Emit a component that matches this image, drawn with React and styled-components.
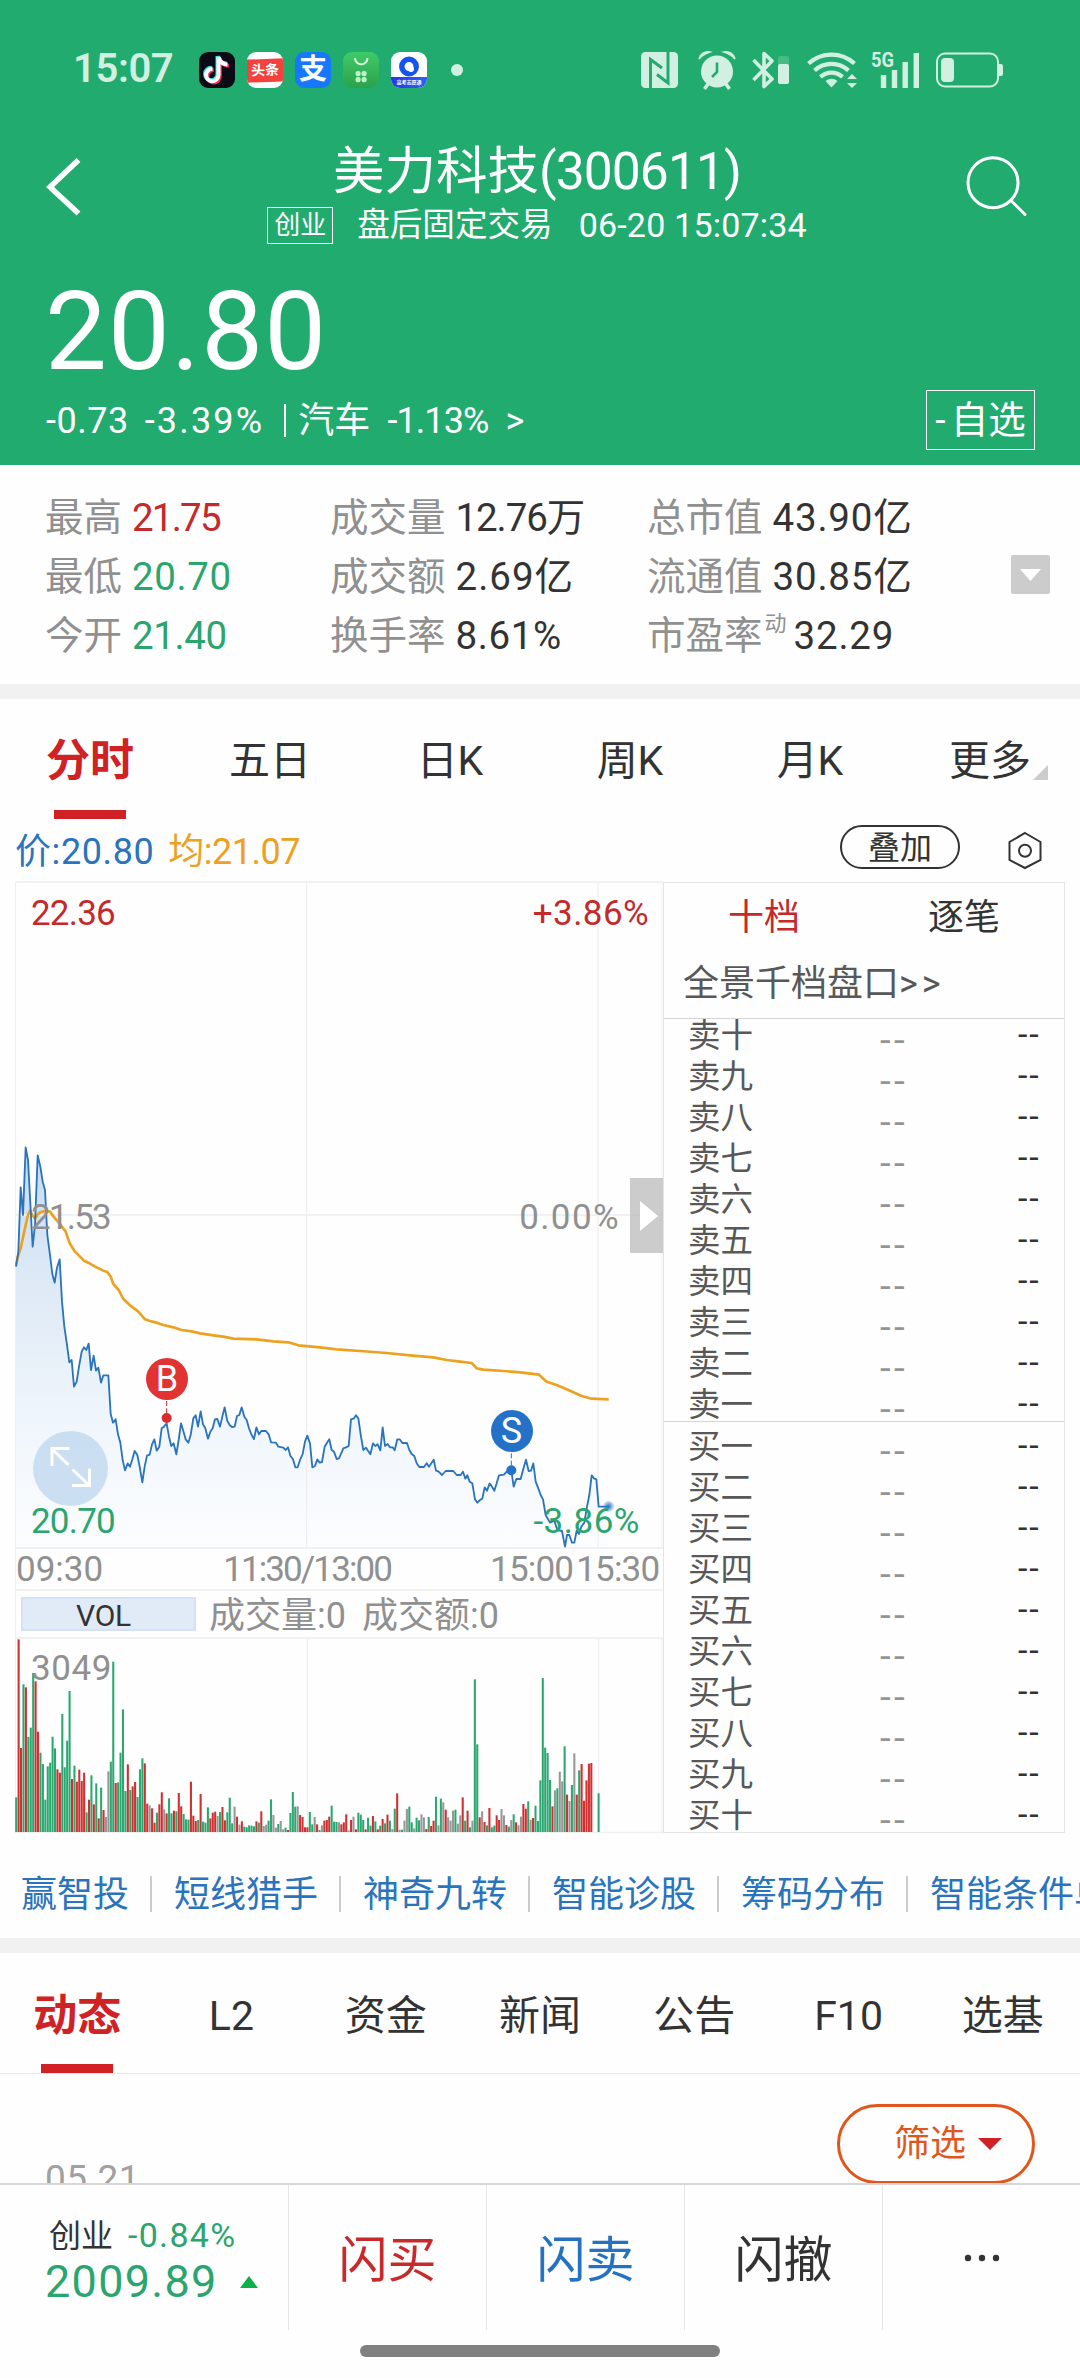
import React from "react";
import styled, { createGlobalStyle } from "styled-components";

const C = {
  up: "#c4292b",
  tab: "#d02225",
  down: "#2ba56e",
  header: "#22ab6e",
  blue: "#2a74bd",
  orange: "#eda11f",
  ink: "#333333",
  mid: "#585858",
  mute: "#909090",
  line: "#e4e4e4",
  soft: "#f1f1f1",
  mint: "#d2f0e2",
};

const Global = createGlobalStyle`
  * { box-sizing: border-box; }
  html, body { margin: 0; padding: 0; background: #fff; }
  body {
    width: 1080px;
    font-family: Roboto, "Noto Sans CJK SC", sans-serif;
    font-weight: 400;
    line-height: 1.15;
    color: ${C.ink};
  }
`;

const Page = styled.div`
  width: 1080px;
  height: 2378px;
  overflow: hidden;
  display: flex;
  flex-direction: column;
  background: #fefefe;
`;

const Text = styled.span`
  white-space: nowrap;
  font-size: ${(p) => p.$size || 36}px;
  color: ${(p) => p.$color || "inherit"};
  letter-spacing: ${(p) => p.$ls || 0}px;
  margin-left: ${(p) => p.$ml || 0}px;
`;

/* ---------- header ---------- */

const Header = styled.header`
  height: 465px;
  flex: none;
  background: ${C.header};
  color: #fff;
`;

const StatusBar = styled.div`
  height: 140px;
  display: flex;
  align-items: center;
  justify-content: space-between;
  padding: 0 76px 0 73px;
  color: ${C.mint};
`;

const StatusGroup = styled.div`
  display: flex;
  align-items: center;
`;

const Clock = styled.span`
  width: 126px;
  margin-top: -3px;
  font-size: 40px;
  font-weight: 600;
  letter-spacing: -0.4px;
`;

const AppIcon = styled.span`
  width: 36px;
  height: 36px;
  margin-right: 12px;
  border-radius: 9px;
  overflow: hidden;
  display: flex;
  flex-direction: column;
  align-items: center;
  justify-content: center;
  background: ${(p) => p.$bg};
`;

const ToutiaoBand = styled.span`
  width: 38px;
  height: 23px;
  background: #f5413d;
  color: #fff;
  font-size: 14px;
  font-weight: 700;
  line-height: 22px;
  text-align: center;
  transform: rotate(-2deg);
`;

const Zhi = styled.span`
  color: #fff;
  font-size: 28px;
  font-weight: 700;
  line-height: 36px;
`;

const TinyCaption = styled.span`
  width: 36px;
  height: 11px;
  background: linear-gradient(90deg, #2b35ea, #2b64f0);
  color: #fff;
  font-size: 5px;
  font-weight: 700;
  line-height: 11px;
  text-align: center;
`;

const Dot = styled.span`
  width: 12px;
  height: 12px;
  margin-left: 12px;
  border-radius: 50%;
  background: ${C.mint};
`;

const Glyph = styled.svg`
  display: block;
  flex: none;
  margin-left: ${(p) => p.$ml || 0}px;
`;

const NavBar = styled.div`
  height: 110px;
  display: flex;
  justify-content: space-between;
  padding: 0 50px 0 44px;
`;

const NavIcon = styled.svg`
  width: 66px;
  height: 66px;
  margin-top: 14px;
  flex: none;
`;

const TitleColumn = styled.div`
  display: flex;
  flex-direction: column;
  align-items: center;
  padding-top: 1px;
  gap: 6px;
`;

const Title = styled.div`
  height: 60px;
  line-height: 62px;
  font-size: 51.5px;
  white-space: nowrap;
`;

const SubTitle = styled.div`
  height: 37px;
  display: flex;
  align-items: center;
`;

const Board = styled.span`
  width: 66px;
  height: 37px;
  border: 1px solid #fff;
  font-size: 26px;
  line-height: 35px;
  text-align: center;
`;

const BigPrice = styled.div`
  margin: 31px 0 9px 45px;
  height: 100px;
  line-height: 102px;
  font-size: 110px;
  letter-spacing: 1.2px;
`;

const ChangeRow = styled.div`
  height: 60px;
  display: flex;
  align-items: center;
  justify-content: space-between;
  padding: 0 45px 0 46px;
`;

const Change = styled.div`
  padding-top: 3px;
  white-space: nowrap;
`;

const WatchButton = styled.button`
  width: 109px;
  height: 60px;
  padding: 0;
  border: 1px solid #fff;
  background: none;
  color: #fff;
  font: 400 37.5px/42px Roboto, "Noto Sans CJK SC", sans-serif;
  display: flex;
  align-items: center;
  justify-content: center;
  gap: 5px;
`;

const Pipe = styled.span`
  display: inline-block;
  width: 2px;
  height: 33px;
  margin: 0 12px 0 20px;
  background: #fff;
  vertical-align: -4px;
`;

/* ---------- stats ---------- */

const Stats = styled.section`
  height: 219px;
  flex: none;
  display: flex;
  align-items: center;
  justify-content: space-between;
  padding: 0 30px 0 45px;
`;

const StatGrid = styled.div`
  display: grid;
  grid-template-columns: 285px 317px 280px;
  grid-auto-rows: 59px;
  margin-top: 5px;
`;

const Stat = styled.div`
  display: flex;
  align-items: center;
  font-size: 38.5px;
  line-height: 44px;
  white-space: nowrap;
`;

const StatLabel = styled.span`
  color: ${C.mute};
`;

const Sup = styled.span`
  font-size: 22px;
  line-height: 26px;
  color: ${C.mute};
  align-self: flex-start;
  margin-top: 4px;
  margin-left: 2px;
  margin-right: -3px;
`;

const StatValue = styled.span`
  margin-left: 10px;
  color: ${(p) => p.$color || C.ink};
  letter-spacing: ${(p) => p.$ls || 0}px;
`;

const Expand = styled.button`
  width: 39px;
  height: 39px;
  border: 0;
  padding: 0;
  border-radius: 2px;
  background: #cccccc;
  display: flex;
  align-items: center;
  justify-content: center;
`;

const Band = styled.div`
  height: 15px;
  flex: none;
  background: ${C.soft};
`;

/* ---------- tabs ---------- */

const Tabs = styled.nav`
  flex: none;
  height: ${(p) => p.$h}px;
  display: grid;
  grid-template-columns: repeat(${(p) => p.$n}, 1fr);
  border-bottom: ${(p) => (p.$border ? "1px solid #e8e8e8" : "0")};
`;

const Tab = styled.div`
  display: flex;
  flex-direction: column;
  align-items: center;
  justify-content: space-between;
  padding-top: ${(p) => p.$pt}px;
  font-size: ${(p) => (p.$active ? 44 : 41)}px;
  line-height: 60px;
  font-weight: ${(p) => (p.$active ? 700 : 400)};
  color: ${(p) => (p.$active ? C.tab : C.ink)};
  white-space: nowrap;
  &::after {
    content: "";
    width: 72px;
    height: 9px;
    background: ${(p) => (p.$active ? C.tab : "transparent")};
  }
`;

const TabLabel = styled.span`
  position: relative;
`;

const Corner = styled.i`
  position: absolute;
  left: 100%;
  bottom: 11px;
  margin-left: 2px;
  border-left: 15px solid transparent;
  border-bottom: 15px solid #cccccc;
`;

/* ---------- chart ---------- */

const Legend = styled.div`
  height: 62px;
  flex: none;
  display: flex;
  align-items: center;
  padding: 0 37px 0 15px;
`;

const LegendValues = styled.div`
  padding-top: 5px;
  white-space: nowrap;
`;

const Overlay = styled.button`
  width: 120px;
  height: 44px;
  margin: -6px 47px 0 auto;
  border: 2px solid ${C.ink};
  border-radius: 22px;
  background: none;
  padding: 0;
  color: ${C.ink};
  font: 400 32px/42px Roboto, "Noto Sans CJK SC", sans-serif;
`;

const Trading = styled.section`
  height: 952px;
  flex: none;
  display: flex;
  padding: 0 15px;
`;

const ChartColumn = styled.div`
  width: 648px;
  flex: none;
  display: flex;
  flex-direction: column;
  border-left: 1px solid #efefef;
`;

const Plot = styled.div`
  position: relative;
  height: ${(p) => p.$h}px;
  margin-left: -1px;
`;

const Canvas = styled.svg`
  display: block;
  width: 648px;
  height: 100%;
`;

const PlotLabel = styled.span`
  position: absolute;
  top: ${(p) => p.$y - 19}px;
  ${(p) => (p.$right ? `right: ${p.$right}px;` : `left: ${p.$left}px;`)}
  height: 40px;
  line-height: 40px;
  font-size: 35px;
  letter-spacing: ${(p) => p.$ls || 0}px;
  color: ${(p) => p.$color};
`;

const Marker = styled.span`
  position: absolute;
  left: ${(p) => p.$x - 21}px;
  top: ${(p) => p.$y - 21}px;
  width: 42px;
  height: 42px;
  border-radius: 50%;
  background: ${(p) => p.$color};
  color: #fff;
  font-size: 36px;
  line-height: 43px;
  text-align: center;
`;

const Fullscreen = styled.svg`
  position: absolute;
  left: 18px;
  top: 550px;
  width: 75px;
  height: 75px;
`;

const PanelHandle = styled.div`
  position: absolute;
  right: 0;
  top: 297px;
  width: 33px;
  height: 75px;
  background: rgba(190, 190, 190, 0.78);
  display: flex;
  align-items: center;
  padding-left: 10px;
`;

const TimeAxis = styled.div`
  height: 42px;
  padding-top: 3px;
  display: flex;
  align-items: center;
  border-bottom: 2px solid ${C.soft};
  color: ${C.mute};
`;

const VolBar = styled.div`
  height: 48px;
  display: flex;
  align-items: center;
  border-bottom: 2px solid ${C.soft};
  color: ${C.mute};
  white-space: nowrap;
`;

const VolTag = styled.span`
  width: 175px;
  height: 34px;
  margin: 0 13px 0 5px;
  border: 2px solid #d5e2f5;
  background: #e1ebf8;
  color: ${C.ink};
  font-size: 30px;
  line-height: 33px;
  text-align: center;
  letter-spacing: -0.3px;
  padding-right: 10px;
`;

const VolFigures = styled.div`
  padding-top: 5px;
`;

/* ---------- order book ---------- */

const Book = styled.div`
  width: 402px;
  border: 1px solid ${C.line};
  margin-top: 1px;
  height: 951px;
  display: flex;
  flex-direction: column;
`;

const BookTabs = styled.div`
  height: 70px;
  display: grid;
  grid-template-columns: 1fr 1fr;
  text-align: center;
  font-size: 36px;
  line-height: 70px;
`;

const BookTab = styled.span`
  color: ${(p) => (p.$active ? C.up : C.ink)};
`;

const DepthLink = styled.div`
  height: 66px;
  padding-left: 19px;
  font-size: 36px;
  line-height: 63px;
  color: ${C.mid};
  border-bottom: 1px solid #d6d6d6;
`;

const Levels = styled.div`
  height: ${(p) => p.$h}px;
  border-bottom: ${(p) => (p.$line ? "1px solid #d6d6d6" : "0")};
`;

const LevelList = styled.div`
  margin-top: ${(p) => p.$shift}px;
`;

const Level = styled.div`
  height: 41px;
  display: grid;
  grid-template-columns: 191px 139px 60px;
  line-height: 41px;
  padding-left: 24px;
`;

const LevelName = styled.span`
  font-size: 32.5px;
  color: ${C.mid};
`;

const LevelPrice = styled.span`
  font-family: "DejaVu Sans", sans-serif;
  font-size: 35px;
  letter-spacing: 1.4px;
  color: #949494;
  line-height: 46px;
`;

const LevelSize = styled.span`
  font-size: 34px;
  letter-spacing: 1.9px;
  color: ${C.ink};
  line-height: 37px;
`;

/* ---------- lower part ---------- */

const Links = styled.nav`
  height: 105px;
  flex: none;
  display: flex;
  align-items: center;
  padding: 19px 0 0 21px;
  overflow: hidden;
`;

const LinkItem = styled.a`
  flex: none;
  display: flex;
  align-items: center;
  font-size: 36px;
  line-height: 42px;
  color: ${C.blue};
  white-space: nowrap;
  &:not(:last-child)::after {
    content: "";
    width: 2px;
    height: 36px;
    margin: -3px 22px 0 21px;
    background: #cccccc;
  }
`;

const Feed = styled.section`
  height: 109px;
  flex: none;
  overflow: hidden;
  display: flex;
  justify-content: space-between;
  align-items: flex-start;
  padding: 30px 45px 0 45px;
`;

const FeedDate = styled.span`
  margin-top: 49px;
  font-size: 37px;
  line-height: 52px;
  letter-spacing: 0.4px;
  color: #a0a0a0;
`;

const Filter = styled.button`
  width: 198px;
  height: 80px;
  padding: 0 0 0 24px;
  border: 3px solid #e0561c;
  border-radius: 40px;
  background: none;
  display: flex;
  align-items: center;
  justify-content: center;
  gap: 12px;
  color: #e0561c;
  font: 400 36px/42px Roboto, "Noto Sans CJK SC", sans-serif;
`;

const BottomBar = styled.footer`
  height: 147px;
  flex: none;
  display: grid;
  grid-template-columns: 288px repeat(4, 198px);
  border-top: 2px solid #d6d6d6;
`;

const IndexCell = styled.div`
  padding: 30px 0 0 45px;
`;

const IndexLine = styled.div`
  display: flex;
  align-items: center;
  height: ${(p) => p.$h}px;
`;

const Action = styled.div`
  display: flex;
  align-items: center;
  justify-content: center;
  border-left: 1px solid #e6e6e6;
  font-size: 49px;
  padding-top: ${(p) => p.$pt || 0}px;
  color: ${(p) => p.$color};
`;

const Home = styled.div`
  width: 360px;
  height: 12px;
  margin: 15px auto 0;
  border-radius: 6px;
  background: #808080;
  flex: none;
`;

/* ---------- data ---------- */

const PRICE =
  "48,500 55,455 62,262 69,345 77,142 84,180 91,310 98,440 105,375 113,166 121,200 128,245 135,270 142,405 150,465 157,522 164,548 171,503 179,478 186,605 193,680 201,735 208,787 215,780 222,860 230,845 237,800 245,755 252,742 259,750 266,731 273,810 281,767 288,812 295,803 303,848 310,826 325,826 332,942 339,968 347,958 354,1003 361,1028 368,1080 375,1111 383,1090 390,1100 397,1078 404,1053 412,1065 419,1100 427,1147 434,1100 441,1067 449,1064 456,1033 463,1018 470,1052 478,1040 485,985 492,980 500,970 507,1010 514,1038 521,1030 529,1063 536,1020 543,970 550,993 557,1018 565,1028 572,1005 580,955 587,946 594,980 602,934 609,973 616,985 624,1016 631,995 638,985 645,958 652,957 660,980 667,950 674,922 682,963 689,975 696,981 704,980 711,948 718,945 725,922 733,950 740,960 747,985 755,1005 762,1017 769,982 777,1003 784,993 798,993 806,1003 813,1027 828,1028 835,1040 850,1043 857,1050 864,1042 871,1067 879,1078 886,1102 893,1102 900,1080 908,1062 915,1025 922,1007 930,1030 937,1102 945,1098 952,1078 959,1088 966,1086 974,1040 981,1028 988,1018 995,1050 1002,1055 1010,1077 1017,1075 1030,1045 1038,1042 1046,1038 1053,958 1062,955 1068,946 1075,955 1083,1010 1090,1050 1098,1043 1111,1063 1119,1030 1126,1038 1133,1033 1141,1051 1148,982 1155,1038 1163,1032 1170,1042 1178,1042 1184,1051 1192,1018 1199,1018 1207,1029 1221,1029 1228,1050 1235,1062 1243,1068 1250,1090 1258,1101 1272,1101 1280,1090 1287,1100 1294,1090 1301,1079 1308,1112 1316,1115 1326,1125 1337,1113 1360,1113 1370,1125 1382,1125 1389,1115 1396,1136 1402,1126 1409,1145 1417,1150 1425,1198 1432,1208 1440,1200 1447,1196 1454,1162 1461,1172 1469,1150 1476,1160 1483,1172 1490,1150 1497,1126 1512,1124 1520,1115 1534,1112 1541,1160 1549,1137 1562,1137 1569,1110 1578,1079 1586,1113 1593,1112 1600,1090 1607,1145 1615,1165 1622,1185 1629,1198 1637,1245 1650,1268 1663,1262 1672,1290 1686,1293 1695,1340 1701,1305 1708,1305 1716,1328 1723,1328 1730,1292 1737,1302 1744,1280 1753,1268 1760,1225 1768,1185 1775,1126 1782,1135 1789,1138 1796,1220 1826,1220";

const AVERAGE =
  "48,495 55,465 62,445 77,375 84,345 90,332 97,345 105,356 112,345 120,337 135,333 150,335 165,355 180,372 197,395 209,430 225,455 240,470 252,482 265,488 285,500 310,512 322,516 332,530 340,552 356,570 370,597 390,616 415,635 435,658 450,663 470,668 490,675 520,682 545,690 575,694 600,700 640,706 670,710 700,716 770,718 820,724 865,727 895,736 960,742 1010,748 1080,753 1160,759 1230,766 1300,772 1340,780 1380,785 1415,789 1430,805 1450,809 1510,813 1560,817 1617,824 1640,845 1670,855 1710,872 1745,888 1775,896 1826,898";

// One entry per minute: direction (r up, g down, x flat) and bar height.
const VOLUME = `g104 r578 r252 g443 r434 g285 g313 g477 r452 r301 g238 g204 g97 g197 g208 g286 g251 r188 r178 g354 g194 g274 g423 r159 g199 r151 r187 r153 r178 g59 r97 g170 r83 g146 r41 g133 r66 x45 x182 g211 g511 r147 g149 g238 g368 g123 r203 g126 r137 r150 g105 g188 g221 r206 r85 x80 r71 r28 g58 r83 r119 x68 r56 g101 g56 r64 g62 r117 r77 g54 g38 g37 r151 r49 r33 g36 r114 g31 g28 g74 r41 r58 r61 x48 g60 r75 r35 g59 g103 g26 x76 r46 x22 r32 g16 g14 g20 g19 g17 r32 g28 r62 x18 x22 g34 g98 x51 x13 g24 x33 x8 g13 r6 g57 g120 g76 x77 r51 r45 r14 r14 g60 g23 x45 r23 g6 x20 r34 r36 r46 g79 g31 g30 x29 r23 r29 r53 x5 r36 x46 r8 g58 g52 g36 r8 g43 g19 r48 g32 r8 g19 r39 g26 r52 g34 x9 g70 r116 x7 g7 x34 x69 g76 g29 x11 g43 g35 x53 x44 r9 g45 r18 r34 g106 x20 g100 x89 r67 x44 x34 x64 g67 x25 x50 r104 g34 r64 g14 x34 g458 g263 r44 x62 r30 g20 r72 g14 g19 r50 r36 x69 x50 r21 g16 x36 g53 r29 x20 x46 r84 r70 g92 x37 r42 g79 g33 g155 g462 g253 g237 g156 r77 x125 g131 x181 x152 g257 r112 x93 g141 x236 r112 g185 r204 r94 r155 r205 r207 x0 x0 g116`
  .split(" ")
  .map((s) => ({ dir: s[0], h: Number(s.slice(1)) }));

const VOL_COLOR = { r: "#cf3030", g: "#2ba870", x: "#979797" };

const NUMERALS = ["一", "二", "三", "四", "五", "六", "七", "八", "九", "十"];

/* ---------- drawings ---------- */

const Triangle = ({ w, h, d, fill, ml }) => (
  <Glyph width={w} height={h} viewBox={`0 0 ${w} ${h}`} $ml={ml}>
    <path d={d} fill={fill} />
  </Glyph>
);

function StatusIcons() {
  const m = C.mint;
  return (
    <StatusGroup>
      <Glyph width="37" height="38" viewBox="0 0 37 38">
        <rect x="0" y="1" width="37" height="36" rx="4.5" fill={m} />
        <path d="M9.5 38V8.5L21 17M27 0V32L16 23.5" fill="none" stroke={C.header} strokeWidth="3" />
      </Glyph>
      <Glyph width="38" height="40" viewBox="0 0 38 40" $ml={20}>
        <circle cx="19" cy="21.5" r="16" fill={m} />
        <path d="M1 9A9 9 0 0 1 12 2Q5 4 1 9ZM37 9A9 9 0 0 0 26 2Q33 4 37 9Z" fill={m} stroke={m} strokeWidth="1.5" />
        <path d="M10 34L6.5 39M28 34L31.5 39" stroke={m} strokeWidth="3.5" />
        <path d="M19 12.5V22L14 27" fill="none" stroke={C.header} strokeWidth="2.6" />
      </Glyph>
      <Glyph width="38" height="40" viewBox="0 0 38 40" $ml={16}>
        <path d="M1.5 10L20 29L12 36.5V3.5L20 11L1.5 30" fill="none" stroke={m} strokeWidth="3.6" strokeLinejoin="round" />
        <rect x="26" y="6" width="11" height="28" rx="2" fill="#46bb85" />
        <rect x="26" y="14" width="11" height="20" rx="2" fill={m} />
      </Glyph>
      <Glyph width="51" height="40" viewBox="0 0 51 40" $ml={17}>
        <g fill="none" stroke={m} strokeWidth="4.2">
          <path d="M1.5 13.5A34 34 0 0 1 47.5 13.5" />
          <path d="M7.5 20.5A25 25 0 0 1 41.5 20.5" />
          <path d="M13.5 27A16 16 0 0 1 35.5 27" />
        </g>
        <path d="M18.5 31Q24.5 26.5 30.5 31L24.5 37.5Z" fill={m} />
        <path d="M40 29L45 24L50 29ZM40 33L45 38L50 33Z" fill={m} />
      </Glyph>
      <Glyph width="49" height="40" viewBox="0 0 49 40" overflow="visible" $ml={13}>
        <text x="0" y="17" fontFamily="Roboto, sans-serif" fontWeight="700" fontSize="21" textLength="23" lengthAdjust="spacingAndGlyphs" fill={m}>
          5G
        </text>
        <path d="M12.5 38V25M23.5 38V20M34.2 38V12M45.3 38V3" stroke={m} strokeWidth="5.4" />
      </Glyph>
      <Glyph width="68" height="36" viewBox="0 0 68 36" $ml={16}>
        <rect x="1" y="1.5" width="61" height="33" rx="8" fill="none" stroke={m} strokeWidth="2" />
        <rect x="5" y="6" width="13" height="24" rx="4" fill={m} />
        <path d="M63 12H65Q67 12 67 14V22Q67 24 65 24H63Z" fill={m} />
      </Glyph>
    </StatusGroup>
  );
}

function AppIcons() {
  const note = "M19.5 5V23A6.2 6.2 0 1 1 13.5 16.8M19.5 5Q21 12 28.5 12.5";
  return (
    <>
      <AppIcon $bg="#0b0b16">
        <Glyph width="36" height="36" viewBox="0 0 36 36" fill="none" strokeWidth="4">
          <path d={note} stroke="#2ee6e2" transform="translate(-1 -1)" />
          <path d={note} stroke="#f5305a" transform="translate(1.3 1.3)" />
          <path d={note} stroke="#fff" />
        </Glyph>
      </AppIcon>
      <AppIcon $bg="#fff">
        <ToutiaoBand>头条</ToutiaoBand>
      </AppIcon>
      <AppIcon $bg="#1677ff">
        <Zhi>支</Zhi>
      </AppIcon>
      <AppIcon $bg="linear-gradient(#3fca68, #2ba24c)">
        <Glyph width="36" height="36" viewBox="0 0 36 36">
          <path d="M12 6A6.2 6.2 0 0 0 24.5 6" fill="none" stroke="#d5f6dc" strokeWidth="2" />
          <g fill="#bdf0c8">
            <rect x="12.5" y="19" width="5.2" height="5.2" rx="2.2" />
            <rect x="18.5" y="19" width="5.2" height="5.2" rx="2.2" />
            <rect x="12.5" y="25" width="5.2" height="5.2" rx="2.2" />
            <rect x="18.5" y="25" width="5.2" height="5.2" rx="2.2" />
          </g>
        </Glyph>
      </AppIcon>
      <AppIcon $bg="#fff">
        <Glyph width="36" height="25" viewBox="0 0 36 25">
          <circle cx="18" cy="14.5" r="7.2" fill="none" stroke="#1554f0" strokeWidth="5.5" />
          <circle cx="20" cy="17" r="3" fill="#fff" />
        </Glyph>
        <TinyCaption>高考志愿通</TinyCaption>
      </AppIcon>
      <Dot />
    </>
  );
}

function PriceChart() {
  return (
    <Plot $h={668}>
      <Canvas viewBox="45 -657 1944 2004" preserveAspectRatio="none">
        <defs>
          <linearGradient id="fade" x1="0" y1="142" x2="0" y2="1342" gradientUnits="userSpaceOnUse">
            <stop offset="0" stopColor="#c6dbf2" />
            <stop offset="0.35" stopColor="#dfeaf6" />
            <stop offset="0.7" stopColor="#f0f6fc" />
            <stop offset="1" stopColor="#fcfdff" />
          </linearGradient>
          <radialGradient id="glow">
            <stop offset="0" stopColor="#2472c8" />
            <stop offset="1" stopColor="#2472c8" stopOpacity="0.12" />
          </radialGradient>
        </defs>
        <polygon points={`48,1342 ${PRICE} 1826,1342`} fill="url(#fade)" />
        <g stroke="#ececec">
          <path d="M45 -654H1989M45 345H1989M45 1344H1989" strokeWidth="6" stroke="#f1f1f1" />
          <path d="M920 -657V1344" strokeWidth="3" />
          <path d="M1794 -657V1344" strokeWidth="5" stroke="#f2f2f2" />
          <path d="M1986 -657V1344" strokeWidth="3" stroke="#f2f2f2" />
        </g>
        <polyline points={AVERAGE} fill="none" stroke={C.orange} strokeWidth="8" strokeLinejoin="round" />
        <polyline points={PRICE} fill="none" stroke={C.blue} strokeWidth="5.5" strokeLinejoin="round" />
        <path d="M500 903V942" stroke={C.up} strokeWidth="3" strokeDasharray="15 7" />
        <circle cx="500" cy="954" r="15" fill="#d92c2c" />
        <path d="M1534 1060V1098" stroke="#2472c8" strokeWidth="3" strokeDasharray="15 7" />
        <circle cx="1534" cy="1111" r="15" fill="#2472c8" />
        <circle cx="1826" cy="1219" r="17" fill="url(#glow)" />
      </Canvas>
      <PlotLabel $left={16} $y={32} $color={C.up} $ls={-0.8}>22.36</PlotLabel>
      <PlotLabel $right={14} $y={32} $color={C.up} $ls={0.4}>+3.86%</PlotLabel>
      <PlotLabel $left={16} $y={336} $color={C.mute} $ls={-1.8}>21.53</PlotLabel>
      <PlotLabel $right={43} $y={336} $color={C.mute} $ls={1.4}>0.00%</PlotLabel>
      <Fullscreen viewBox="0 0 75 75">
        <circle cx="37.5" cy="37.5" r="37.5" fill="#c3d9f0" fillOpacity="0.85" />
        <path d="M19 35V17.5H36.5M18 17L35.5 34M39 54.5H56.5V37.5M56 54L39.5 38.5" fill="none" stroke="#fff" strokeWidth="3" />
      </Fullscreen>
      <PlotLabel $left={16} $y={640} $color={C.down} $ls={-0.8}>20.70</PlotLabel>
      <PlotLabel $right={23} $y={640} $color={C.down} $ls={0.5}>-3.86%</PlotLabel>
      <Marker $x={152} $y={498} $color="#e23333">B</Marker>
      <Marker $x={496.5} $y={550} $color="#2472c8">S</Marker>
      <PanelHandle>
        <Triangle w={18} h={30} d="M0 0L18 15L0 30Z" fill="#fff" />
      </PanelHandle>
    </Plot>
  );
}

function VolumeChart() {
  return (
    <Plot $h={194}>
      <Canvas viewBox="45 0 1944 582" preserveAspectRatio="none">
        <g stroke="#ececec" strokeWidth="3">
          <path d="M922 0V580" />
          <path d="M1796 0V580" />
          <path d="M1986 0V580" />
          <path d="M45 580H1989" />
        </g>
        {VOLUME.map((v, i) => (
          <rect key={i} x={45.5 + i * 7.28} y={579 - v.h} width="6.2" height={v.h} fill={VOL_COLOR[v.dir]} />
        ))}
      </Canvas>
      <PlotLabel $left={16} $y={29} $color={C.mute} $ls={0.6}>3049</PlotLabel>
    </Plot>
  );
}

const BookLevels = ({ side, names, h, shift, line }) => (
  <Levels $h={h} $line={line}>
    <LevelList $shift={shift}>
      {names.map((n) => (
        <Level key={n}>
          <LevelName>{side + n}</LevelName>
          <LevelPrice>--</LevelPrice>
          <LevelSize>--</LevelSize>
        </Level>
      ))}
    </LevelList>
  </Levels>
);

const STATS = [
  ["最高", "21.75", C.up, -1.8],
  ["成交量", "12.76万", null, -1.1],
  ["总市值", "43.90亿", null, 0.8],
  ["最低", "20.70", C.down, 0.6],
  ["成交额", "2.69亿", null, 1],
  ["流通值", "30.85亿", null, 0.8],
  ["今开", "21.40", C.down, -0.4],
  ["换手率", "8.61%", null, 0.6],
  ["市盈率", "32.29", null, 0.8, "动"],
];

export default function App() {
  return (
    <Page>
      <Global />
      <Header>
        <StatusBar>
          <StatusGroup>
            <Clock>15:07</Clock>
            <AppIcons />
          </StatusGroup>
          <StatusIcons />
        </StatusBar>
        <NavBar>
          <NavIcon viewBox="0 0 66 66" fill="none" stroke="#fff" strokeWidth="5.5">
            <path d="M34.5 6L6 33L34.5 59.5" />
          </NavIcon>
          <TitleColumn>
            <Title>
              美力科技<Text $size={51.5} $ls={-0.9}>(300611)</Text>
            </Title>
            <SubTitle>
              <Board>创业</Board>
              <Text $size={32.6} $ml={24}>盘后固定交易</Text>
              <Text $size={34} $ml={26} $ls={0.2}>06-20 15:07:34</Text>
            </SubTitle>
          </TitleColumn>
          <NavIcon viewBox="0 0 66 66" fill="none" stroke="#fff" strokeWidth="3" strokeLinecap="round">
            <circle cx="29" cy="28.7" r="25" />
            <path d="M47 46.5L61 60.5" />
          </NavIcon>
        </NavBar>
        <BigPrice>20.80</BigPrice>
        <ChangeRow>
          <Change>
            <Text $ls={0.5}>-0.73</Text>
            <Text $ml={16} $ls={2.2}>-3.39%</Text>
            <Pipe />
            <Text $size={36}>汽车</Text>
            <Text $ml={17} $ls={-0.9}>-1.13%</Text>
            <Text $ml={17}>&gt;</Text>
          </Change>
          <WatchButton>
            <span>-</span>
            <span>自选</span>
          </WatchButton>
        </ChangeRow>
      </Header>

      <Stats>
        <StatGrid>
          {STATS.map(([label, value, color, ls, sup]) => (
            <Stat key={label}>
              <StatLabel>{label}</StatLabel>
              {sup && <Sup>{sup}</Sup>}
              <StatValue $color={color} $ls={ls}>{value}</StatValue>
            </Stat>
          ))}
        </StatGrid>
        <Expand>
          <Triangle w={21} h={12} d="M0 0H21L10.5 12Z" fill="#fff" />
        </Expand>
      </Stats>
      <Band />

      <Tabs $h={120} $n={6}>
        {["分时", "五日", "日K", "周K", "月K", "更多"].map((t, i) => (
          <Tab key={t} $active={i === 0} $pt={32}>
            <TabLabel>
              {t}
              {i === 5 && <Corner />}
            </TabLabel>
          </Tab>
        ))}
      </Tabs>

      <Legend>
        <LegendValues>
          <Text $size={36} $color={C.blue} $ls={0.6}>价:20.80</Text>
          <Text $size={36} $color={C.orange} $ls={-0.5} $ml={14}>均:21.07</Text>
        </LegendValues>
        <Overlay>叠加</Overlay>
        <Glyph width="36" height="40" viewBox="0 0 36 40" fill="none" stroke={C.ink} strokeWidth="2">
          <path d="M18 3L33.500 12V30L18 38L2.500 30V12Z" />
          <circle cx="18" cy="20.700" r="6" />
        </Glyph>
      </Legend>

      <Trading>
        <ChartColumn>
          <PriceChart />
          <TimeAxis>
            <Text $size={35}>09:30</Text>
            <Text $size={35} $ml={120} $ls={-1.9}>11:30/13:00</Text>
            <Text $size={35} $ml={99} $ls={-0.8}>15:00</Text>
            <Text $size={35} $ml={3} $ls={-0.8}>15:30</Text>
          </TimeAxis>
          <VolBar>
            <VolTag>VOL</VolTag>
            <VolFigures>
              <Text>成交量:0</Text>
              <Text $ml={16}>成交额:0</Text>
            </VolFigures>
          </VolBar>
          <VolumeChart />
        </ChartColumn>
        <Book>
          <BookTabs>
            <BookTab $active>十档</BookTab>
            <BookTab>逐笔</BookTab>
          </BookTabs>
          <DepthLink>
            全景千档盘口<Text $ls={4}>&gt;&gt;</Text>
          </DepthLink>
          <BookLevels side="卖" names={[...NUMERALS].reverse()} h={403} shift={-3} line />
          <BookLevels side="买" names={NUMERALS} h={409} shift={5} />
        </Book>
      </Trading>

      <Links>
        {["赢智投", "短线猎手", "神奇九转", "智能诊股", "筹码分布", "智能条件单"].map((t) => (
          <LinkItem key={t}>{t}</LinkItem>
        ))}
      </Links>
      <Band />

      <Tabs $h={121} $n={7} $border>
        {["动态", "L2", "资金", "新闻", "公告", "F10", "选基"].map((t, i) => (
          <Tab key={t} $active={i === 0} $pt={33}>
            <TabLabel>{t}</TabLabel>
          </Tab>
        ))}
      </Tabs>

      <Feed>
        <FeedDate>05.21</FeedDate>
        <Filter>
          筛选
          <Triangle w={24} h={12} d="M0 0H24L12 12Z" fill={C.tab} />
        </Filter>
      </Feed>

      <BottomBar>
        <IndexCell>
          <IndexLine $h={42}>
            <Text $size={32} $ml={4}>创业</Text>
            <Text $size={34} $ml={15} $color={C.down} $ls={1.3}>-0.84%</Text>
          </IndexLine>
          <IndexLine $h={50}>
            <Text $size={45} $color={C.down} $ls={1.3}>2009.89</Text>
            <Triangle w={18} h={12} d="M9 0L18 12H0Z" fill="#0bb04a" ml={22} />
          </IndexLine>
        </IndexCell>
        <Action $color="#c8292b" $pt={7}>闪买</Action>
        <Action $color="#2472c0" $pt={7}>闪卖</Action>
        <Action $color={C.ink} $pt={7}>闪撤</Action>
        <Action $color={C.ink}>
          <Glyph width="36" height="8" viewBox="0 0 36 8" fill={C.ink}>
            <circle cx="4" cy="4" r="3.200" />
            <circle cx="18" cy="4" r="3.200" />
            <circle cx="32" cy="4" r="3.200" />
          </Glyph>
        </Action>
      </BottomBar>
      <Home />
    </Page>
  );
}
